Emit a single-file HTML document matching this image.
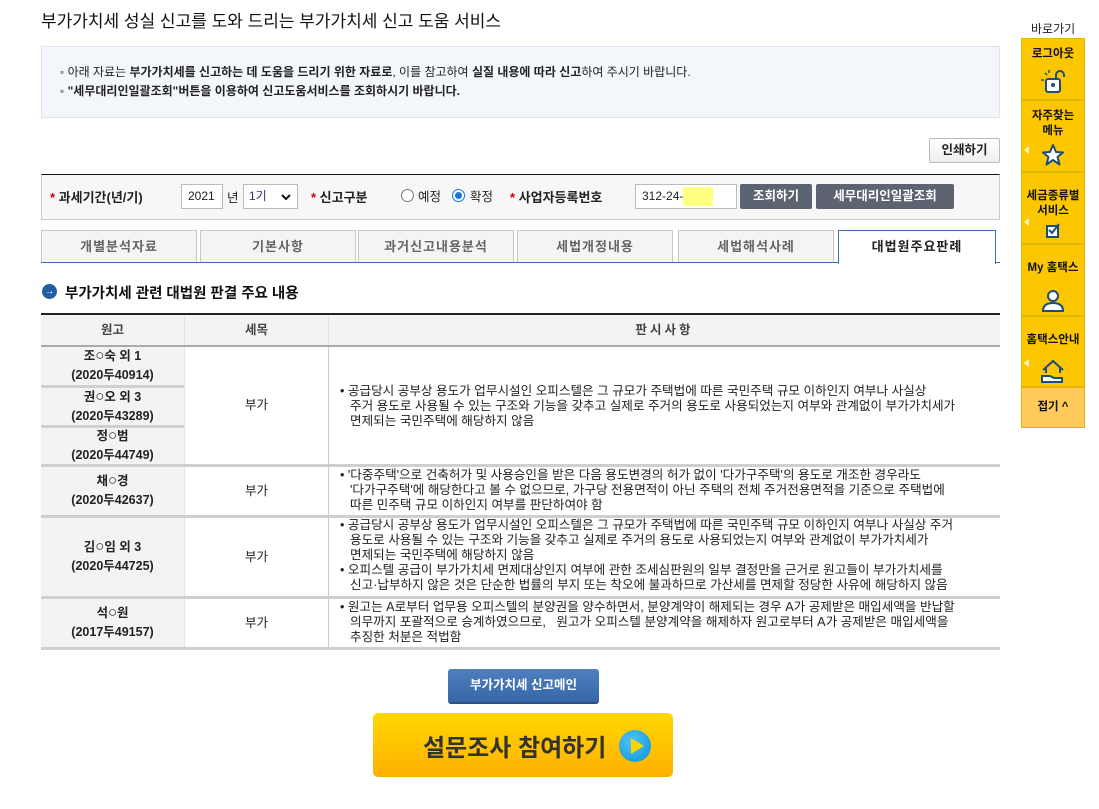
<!DOCTYPE html>
<html><head><meta charset="utf-8">
<style>
*{margin:0;padding:0;box-sizing:border-box}
body{width:1099px;height:809px;background:#fff;font-family:"Liberation Sans","Noto Sans CJK KR",sans-serif;color:#222;position:relative;overflow:hidden;font-size:12px}
.a{position:absolute}
.b{font-weight:bold}
.tab{position:absolute;top:230px;height:33px;border:1px solid #c8c8c8;border-bottom:none;background:#f4f4f4;color:#666;font-weight:bold;font-size:13px;text-align:center;line-height:32px;letter-spacing:1px}
.cell{position:absolute;display:flex;align-items:center;justify-content:center;text-align:center;font-size:12.5px;line-height:19px}
.hl{position:absolute;left:41px;width:959px;height:3px;background:#cfcfcf}
.txt{position:absolute;left:337px;width:665px;font-size:12.6px;line-height:15px;color:#222;white-space:nowrap}
.txt div{padding-left:13px;text-indent:-10px}
.o{font-size:15px;line-height:10px}
.sb{position:absolute;left:1021px;width:64px;background:#fdc700;border:1px solid #e3b600;text-align:center;font-weight:bold;font-size:11.5px;line-height:15px;color:#111}
.tri{position:absolute;left:2px;width:0;height:0;border-top:4px solid transparent;border-bottom:4px solid transparent;border-right:5px solid #fff8c0}
</style></head><body>
<div class="a" style="left:41px;top:7px;font-size:17px;color:#111">부가가치세 성실 신고를 도와 드리는 부가가치세 신고 도움 서비스</div>
<div class="a" style="left:41px;top:46px;width:959px;height:72px;background:#f3f6fb;border:1px solid #dfe4ec"></div>
<div class="a" style="left:60px;top:63px;font-size:12px;line-height:19px"><span style="color:#999">▪</span> 아래 자료는 <b>부가가치세를 신고하는 데 도움을 드리기 위한 자료로</b>, 이를 참고하여 <b>실질 내용에 따라 신고</b>하여 주시기 바랍니다.<br><span style="color:#999">▪</span> <b>"세무대리인일괄조회"버튼을 이용하여 신고도움서비스를 조회하시기 바랍니다.</b></div>
<div class="a" style="left:929px;top:138px;width:71px;height:25px;border:1px solid #bbb;border-radius:2px;background:linear-gradient(#fff,#eee);font-weight:bold;font-size:12.5px;text-align:center;line-height:23px">인쇄하기</div>
<div class="a" style="left:41px;top:174px;width:959px;height:46px;background:#f7f7f7;border:1px solid #ccc;border-top:1px solid #111"></div>
<div class="a b" style="left:50px;top:187px;font-size:13px"><span style="color:#c00">*</span> 과세기간(년/기)</div>
<div class="a" style="left:181px;top:184px;width:42px;height:25px;border:1px solid #bbb;background:#fff;font-size:12px;line-height:23px;padding-left:6px">2021</div>
<div class="a" style="left:227px;top:187px;font-size:12.5px">년</div>
<div class="a" style="left:243px;top:184px;width:55px;height:25px;border:1px solid #bbb;background:#fff;font-size:12px;line-height:23px;padding-left:5px;color:#336">1기<svg width="10" height="8" viewBox="0 0 10 8" style="position:absolute;right:6px;top:8px"><path d="M1 2l4 4 4-4" fill="none" stroke="#111" stroke-width="2"/></svg></div>
<div class="a b" style="left:311px;top:187px;font-size:13px"><span style="color:#c00">*</span> 신고구분</div>
<div class="a" style="left:401px;top:189px;width:13px;height:13px;border:1px solid #777;border-radius:50%;background:#fff"></div>
<div class="a" style="left:418px;top:186px;font-size:12.5px">예정</div>
<div class="a" style="left:452px;top:189px;width:13px;height:13px;border:1px solid #1a73e8;border-radius:50%;background:#fff"><div style="margin:2px;width:7px;height:7px;border-radius:50%;background:#1a73e8"></div></div>
<div class="a" style="left:470px;top:186px;font-size:12.5px">확정</div>
<div class="a b" style="left:510px;top:187px;font-size:13px"><span style="color:#c00">*</span> 사업자등록번호</div>
<div class="a" style="left:635px;top:184px;width:102px;height:25px;border:1px solid #bbb;background:#fff;font-size:12px;line-height:23px;padding-left:6px">312-24-<span style="display:inline-block;width:30px;height:19px;background:#ffff80;vertical-align:middle"></span></div>
<div class="a" style="left:740px;top:184px;width:72px;height:25px;background:#5b6470;border-radius:2px;color:#fff;font-weight:bold;font-size:12.5px;text-align:center;line-height:25px">조회하기</div>
<div class="a" style="left:816px;top:184px;width:138px;height:25px;background:#5b6470;border-radius:2px;color:#fff;font-weight:bold;font-size:12.5px;text-align:center;line-height:25px">세무대리인일괄조회</div>
<div class="tab" style="left:41px;width:156px">개별분석자료</div>
<div class="tab" style="left:200px;width:156px">기본사항</div>
<div class="tab" style="left:358px;width:156px">과거신고내용분석</div>
<div class="tab" style="left:517px;width:156px">세법개정내용</div>
<div class="tab" style="left:678px;width:156px">세법해석사례</div>
<div class="a" style="left:41px;top:262px;width:959px;height:1px;background:#3a6fb5"></div>
<div class="tab" style="left:838px;width:158px;background:#fff;color:#222;border:1px solid #3a6fb5;border-bottom:none;height:34px">대법원주요판례</div>
<div class="a" style="left:42px;top:284px;width:15px;height:15px;border-radius:50%;background:#1f5f9f;color:#fff;font-size:10px;text-align:center;line-height:15px;font-weight:bold">→</div>
<div class="a b" style="left:65px;top:282px;font-size:14.5px;color:#111">부가가치세 관련 대법원 판결 주요 내용</div>
<div class="a" style="left:41px;top:313px;width:959px;height:2px;background:#222"></div>
<div class="a" style="left:41px;top:315px;width:959px;height:31px;background:#f4f3f1"></div>
<div class="cell b" style="left:41px;top:315px;width:143px;height:31px;color:#444">원고</div>
<div class="cell b" style="left:184px;top:315px;width:144px;height:31px;color:#444;border-left:1px solid #e3e3e3">세목</div>
<div class="cell b" style="left:328px;top:315px;width:672px;height:31px;color:#444;border-left:1px solid #e3e3e3;letter-spacing:3px">판시사항</div>
<div class="a" style="left:41px;top:346px;width:143px;height:302px;background:#f4f3f1"></div>
<div class="a" style="left:184px;top:346px;width:1px;height:302px;background:#e6e6e6"></div>
<div class="a" style="left:328px;top:346px;width:1px;height:302px;background:#ccc"></div>
<div class="a" style="left:41px;top:345px;width:959px;height:2px;background:#aaa"></div>
<div class="a" style="left:41px;top:385px;width:143px;height:3px;background:#cfcfcf"></div>
<div class="a" style="left:41px;top:425px;width:143px;height:3px;background:#cfcfcf"></div>
<div class="hl" style="top:464px"></div>
<div class="hl" style="top:515px"></div>
<div class="hl" style="top:596px"></div>
<div class="hl" style="top:647px"></div>
<div class="cell b" style="left:41px;top:347px;width:143px;height:38px"><div>조<span class="o">○</span>숙 외 1<br>(2020두40914)</div></div>
<div class="cell b" style="left:41px;top:388px;width:143px;height:37px"><div>권<span class="o">○</span>오 외 3<br>(2020두43289)</div></div>
<div class="cell b" style="left:41px;top:428px;width:143px;height:36px"><div>정<span class="o">○</span>범<br>(2020두44749)</div></div>
<div class="cell" style="left:185px;top:347px;width:143px;height:117px">부가</div>
<div class="txt" style="top:384px"><div>• 공급당시 공부상 용도가 업무시설인 오피스텔은 그 규모가 주택법에 따른 국민주택 규모 이하인지 여부나 사실상<br>주거 용도로 사용될 수 있는 구조와 기능을 갖추고 실제로 주거의 용도로 사용되었는지 여부와 관계없이 부가가치세가<br>면제되는 국민주택에 해당하지 않음</div></div>
<div class="cell b" style="left:41px;top:467px;width:143px;height:48px"><div>채<span class="o">○</span>경<br>(2020두42637)</div></div>
<div class="cell" style="left:185px;top:467px;width:143px;height:48px">부가</div>
<div class="txt" style="top:468px"><div>• '다중주택'으로 건축허가 및 사용승인을 받은 다음 용도변경의 허가 없이 '다가구주택'의 용도로 개조한 경우라도<br>'다가구주택'에 해당한다고 볼 수 없으므로, 가구당 전용면적이 아닌 주택의 전체 주거전용면적을 기준으로 주택법에<br>따른 민주택 규모 이하인지 여부를 판단하여야 함</div></div>
<div class="cell b" style="left:41px;top:518px;width:143px;height:78px"><div>김<span class="o">○</span>임 외 3<br>(2020두44725)</div></div>
<div class="cell" style="left:185px;top:518px;width:143px;height:78px">부가</div>
<div class="txt" style="top:518px"><div>• 공급당시 공부상 용도가 업무시설인 오피스텔은 그 규모가 주택법에 따른 국민주택 규모 이하인지 여부나 사실상 주거<br>용도로 사용될 수 있는 구조와 기능을 갖추고 실제로 주거의 용도로 사용되었는지 여부와 관계없이 부가가치세가<br>면제되는 국민주택에 해당하지 않음</div><div>• 오피스텔 공급이 부가가치세 면제대상인지 여부에 관한 조세심판원의 일부 결정만을 근거로 원고들이 부가가치세를<br>신고·납부하지 않은 것은 단순한 법률의 부지 또는 착오에 불과하므로 가산세를 면제할 정당한 사유에 해당하지 않음</div></div>
<div class="cell b" style="left:41px;top:599px;width:143px;height:48px"><div>석<span class="o">○</span>원<br>(2017두49157)</div></div>
<div class="cell" style="left:185px;top:599px;width:143px;height:48px">부가</div>
<div class="txt" style="top:600px"><div>• 원고는 A로부터 업무용 오피스텔의 분양권을 양수하면서, 분양계약이 해제되는 경우 A가 공제받은 매입세액을 반납할<br>의무까지 포괄적으로 승계하였으므로,&nbsp;&nbsp; 원고가 오피스텔 분양계약을 해제하자 원고로부터 A가 공제받은 매입세액을<br>추징한 처분은 적법함</div></div>
<div class="a" style="left:448px;top:669px;width:151px;height:33px;border-radius:3px;background:linear-gradient(#4f7fbf,#3567a6);box-shadow:0 2px 0 #2a4f80;color:#fff;font-weight:bold;font-size:12.5px;text-align:center;line-height:33px">부가가치세 신고메인</div>
<div class="a" style="left:373px;top:713px;width:300px;height:64px;border-radius:5px;background:linear-gradient(#ffd800,#ffb000);"></div>
<div class="a" style="left:423px;top:728px;font-size:24px;color:#333;font-weight:bold">설문조사 참여하기</div>
<div class="a" style="left:619px;top:730px;width:32px;height:32px;border-radius:50%;background:radial-gradient(circle at 40% 35%,#4fc6f5,#0b8fd8)"><div style="position:absolute;left:12px;top:8px;border-left:13px solid #ffd200;border-top:8px solid transparent;border-bottom:8px solid transparent"></div></div>
<div class="a" style="left:1031px;top:20px;font-size:12px;color:#222">바로가기</div>
<div class="sb" style="top:38px;height:62px;padding-top:8px">로그아웃
<svg width="30" height="28" viewBox="0 0 30 28" style="display:block;margin:6px auto 0"><rect x="8" y="11" width="14" height="13" rx="2" fill="#fff" stroke="#1d4e7a" stroke-width="2"/><circle cx="15" cy="17" r="2" fill="#1d4e7a"/><path d="M18 11V7a4 4 0 0 1 8 0v2" fill="none" stroke="#1d4e7a" stroke-width="2"/><path d="M3 12h3M7 5l2 2M11 2v3" stroke="#1d4e7a" stroke-width="1.5"/></svg></div>
<div class="sb" style="top:100px;height:72px;padding-top:8px">자주찾는<br>메뉴<div class="tri" style="top:45px"></div>
<svg width="24" height="24" viewBox="0 0 24 24" style="display:block;margin:4px auto 0"><path d="M12 2l3 7 7 .5-5.5 4.5 2 7.5L12 17l-6.5 4.5 2-7.5L2 9.5 9 9z" fill="#fff" stroke="#1d4e7a" stroke-width="2" stroke-linejoin="round"/></svg></div>
<div class="sb" style="top:172px;height:72px;padding-top:16px">세금종류별<br>서비스<div class="tri" style="top:45px"></div>
<svg width="16" height="16" viewBox="0 0 16 16" style="display:block;margin:4px auto 0"><rect x="2" y="3" width="11" height="11" fill="#fff" stroke="#1d4e7a" stroke-width="2"/><path d="M4 7l3 3 7-9" fill="none" stroke="#1d4e7a" stroke-width="2"/></svg></div>
<div class="sb" style="top:244px;height:72px;padding-top:16px">My 홈택스
<svg width="26" height="26" viewBox="0 0 26 26" style="display:block;margin:12px auto 0"><circle cx="13" cy="8" r="5" fill="#fff" stroke="#1d4e7a" stroke-width="2"/><path d="M3 23c0-6 4-8 10-8s10 2 10 8z" fill="#fff" stroke="#1d4e7a" stroke-width="2"/></svg></div>
<div class="sb" style="top:316px;height:71px;padding-top:16px">홈택스안내<div class="tri" style="top:42px"></div>
<svg width="28" height="26" viewBox="0 0 28 26" style="display:block;margin:10px auto 0"><path d="M4 12L14 3l10 9M7 10v5M21 10v5" fill="none" stroke="#1d4e7a" stroke-width="2"/><path d="M3 18h8l4 2h8v4H3z" fill="#fff" stroke="#1d4e7a" stroke-width="2"/></svg></div>
<div class="sb" style="top:387px;height:41px;background:#fecb5a;line-height:39px">접기 ^</div>
</body></html>
